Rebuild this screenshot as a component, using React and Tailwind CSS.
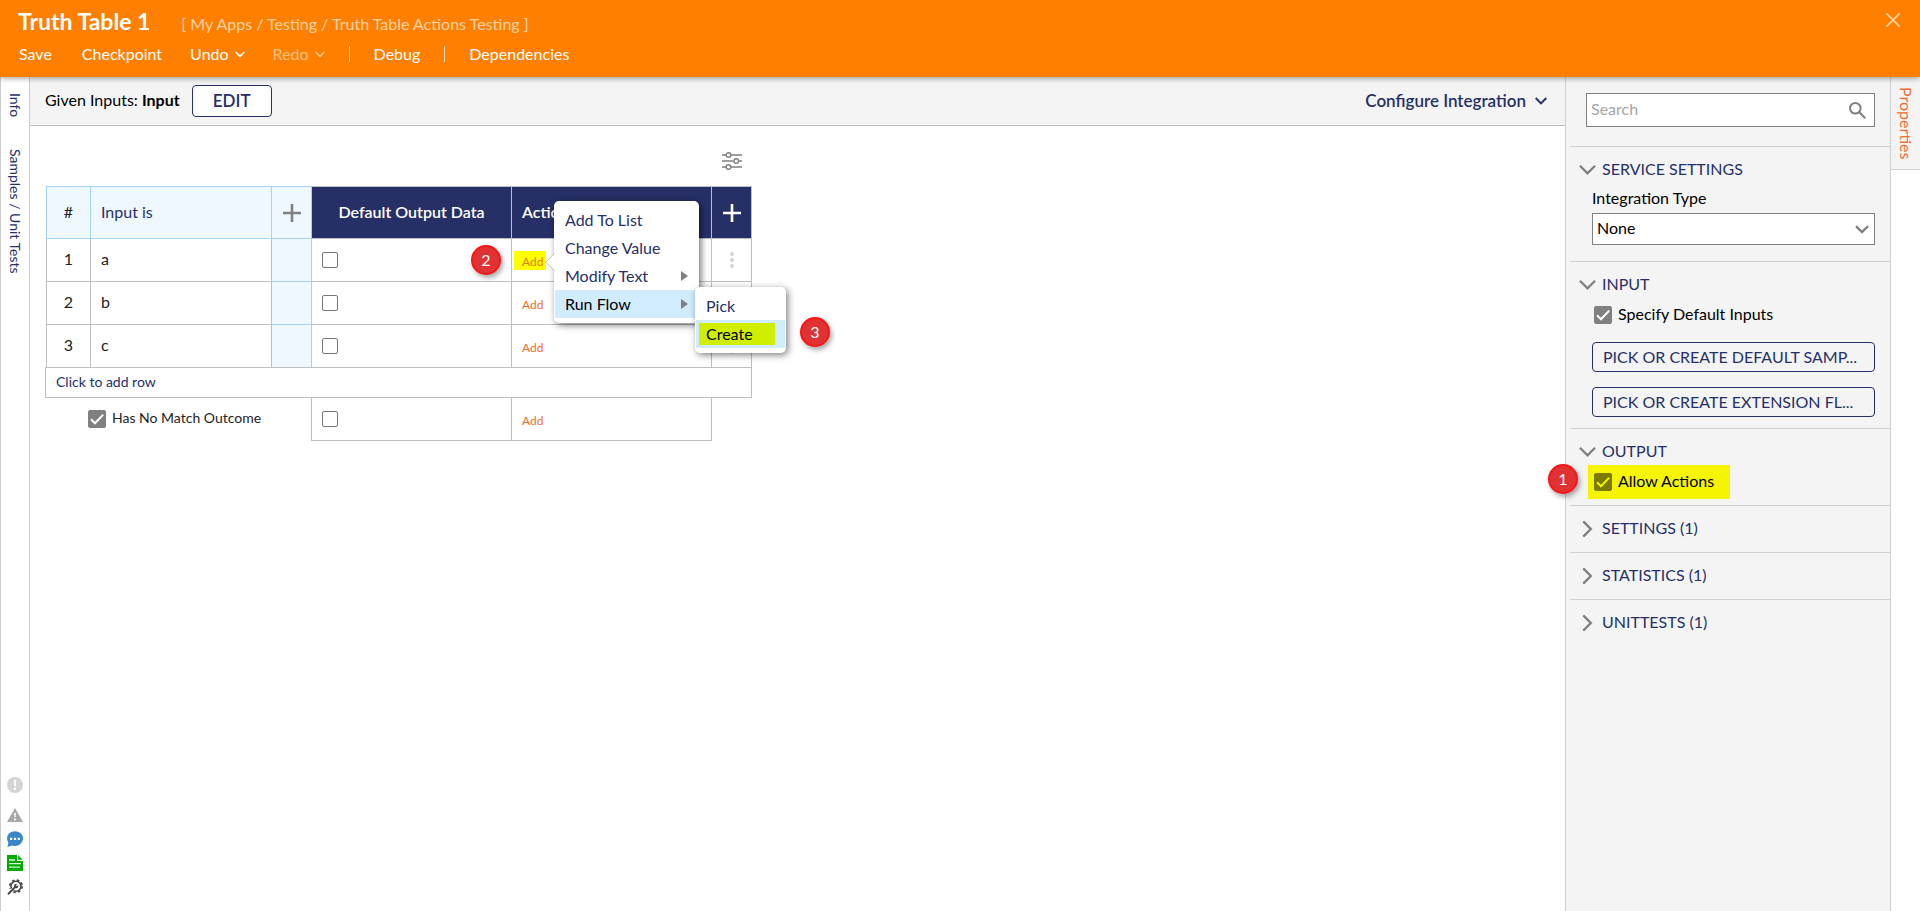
import { useState } from "react"

const rows = [
  { id: 1, value: "a" },
  { id: 2, value: "b" },
  { id: 3, value: "c" },
]

function Chevron({ className, strokeWidth = 2.5 }) {
  return (
    <svg className={className} viewBox="0 0 18 12" fill="none" stroke="currentColor" strokeWidth={strokeWidth}>
      <path d="M1 1.5 9 9.5 17 1.5" />
    </svg>
  )
}

function Plus({ className }) {
  return (
    <svg className={className} width="18" height="18" viewBox="0 0 18 18" stroke="currentColor" strokeWidth="2.6">
      <path d="M9 0v18M0 9h18" />
    </svg>
  )
}

function CheckBox({ id, defaultChecked = true, tone = "gray" }) {
  const yellow = tone === "yellow"
  return (
    <span className="grid size-[18px] shrink-0">
      <input
        id={id}
        type="checkbox"
        defaultChecked={defaultChecked}
        className={`peer col-start-1 row-start-1 size-[18px] appearance-none rounded-xs border border-[#808080] ${
          yellow ? "checked:border-[#7b7b00] checked:bg-[#7b7b00]" : "checked:bg-[#808080]"
        }`}
      />
      <svg
        className={`pointer-events-none invisible col-start-1 row-start-1 size-[18px] peer-checked:visible ${
          yellow ? "text-[#f5f500]" : "text-white"
        }`}
        viewBox="0 0 18 18"
        fill="none"
        stroke="currentColor"
        strokeWidth="2"
      >
        <path d="M3 9.2 7 13.2 15.2 4.6" />
      </svg>
    </span>
  )
}

function EmptyCheck({ label }) {
  return (
    <input
      type="checkbox"
      aria-label={label}
      className="block size-4 appearance-none rounded-[2px] border border-[#767676] bg-white"
    />
  )
}

function Badge({ children, className }) {
  return (
    <span
      className={`absolute z-30 flex size-[30px] items-center justify-center rounded-full border-2 border-[#fb1414] bg-[#e03233] text-base text-white shadow-[2px_3px_5px_rgba(0,0,0,0.35)] ${className}`}
    >
      {children}
    </span>
  )
}

function Header() {
  return (
    <header className="relative z-20 h-[77px] shrink-0 bg-[#ff8000] text-white shadow-[0_1px_6px_rgba(0,0,0,0.4)]">
      <div className="flex items-baseline gap-[31px] pl-[18px] pt-[7px]">
        <h1 className="text-[23px] leading-7 font-bold">Truth Table 1</h1>
        <span className="text-base leading-6 text-[#ffd2a3]">[ My Apps / Testing / Truth Table Actions Testing ]</span>
      </div>
      <nav className="flex items-center pl-[19px] pt-[6px] text-base leading-6">
        <button className="mr-[30px]">Save</button>
        <button className="mr-7">Checkpoint</button>
        <button className="mr-7 flex items-center gap-[6px]">
          Undo <Chevron className="h-[7px] w-[10px]" strokeWidth={3} />
        </button>
        <button className="flex items-center gap-[6px] text-[#ffc080]" disabled>
          Redo <Chevron className="h-[7px] w-[10px]" strokeWidth={3} />
        </button>
        <span className="mx-6 h-4 w-px bg-[#ffd9b3]" />
        <button>Debug</button>
        <span className="mx-6 h-4 w-px bg-[#ffd9b3]" />
        <button>Dependencies</button>
      </nav>
      <button aria-label="Close" className="absolute right-5 top-[13px] text-[#ffd2a3]">
        <svg width="14" height="14" viewBox="0 0 14 14" stroke="currentColor" strokeWidth="1.8">
          <path d="M0 0 14 14M14 0 0 14" />
        </svg>
      </button>
    </header>
  )
}

function LeftRail() {
  return (
    <aside className="flex w-[30px] shrink-0 flex-col items-center border-x border-[#ccc] bg-white text-[#263066]">
      <button className="mt-4 text-sm leading-5 [writing-mode:vertical-rl]">Info</button>
      <button className="mt-8 text-sm leading-5 [writing-mode:vertical-rl]">Samples / Unit Tests</button>
      <div className="mt-auto mb-4 flex flex-col items-center gap-2">
        <svg className="mb-[6px]" width="16" height="16" viewBox="0 0 16 16">
          <circle cx="8" cy="8" r="8" fill="#d4d4d4" />
          <path d="M6.8 3h2.4l-.5 6.2H7.3z" fill="#fff" />
          <circle cx="8" cy="11.8" r="1.3" fill="#fff" />
        </svg>
        <svg width="16" height="16" viewBox="0 0 16 16">
          <path d="M8 1 16 15H0z" fill="#a8a8a8" />
          <path d="M7.1 6h1.8l-.3 4.4H7.4z" fill="#fff" />
          <circle cx="8" cy="12.4" r="1" fill="#fff" />
        </svg>
        <svg width="16" height="16" viewBox="0 0 16 16">
          <ellipse cx="8" cy="7.6" rx="8" ry="7.4" fill="#3a87c8" />
          <path d="M1.5 11 .5 16l6-2z" fill="#3a87c8" />
          <path d="M3 6.8h2.2V9H3zM6.9 6.8h2.2V9H6.9zM10.8 6.8H13V9h-2.2z" fill="#fff" />
        </svg>
        <svg width="16" height="16" viewBox="0 0 16 16">
          <path d="M0 0h11l5 5v11H0z" fill="#00ab00" />
          <path d="M10.6 0v5.4H16" fill="none" stroke="#fff" strokeWidth="1.2" />
          <path d="M2 5h6M2 8.6h12M2 12.2h11" stroke="#d8f5d8" strokeWidth="1.3" />
        </svg>
        <svg width="16" height="16" viewBox="0 0 16 16" fill="none" stroke="#484848">
          <circle cx="9" cy="7.2" r="6.2" strokeWidth="1.6" strokeDasharray="2.6 2.27" />
          <circle cx="9" cy="7.2" r="5" strokeWidth="1.6" />
          <path d="M0 16 5.5 10.5" stroke="#fff" strokeWidth="4" />
          <path d="M1 15.2 8.6 7.6" strokeWidth="2" />
          <circle cx="9.2" cy="7" r="2.2" fill="#484848" stroke="none" />
          <path d="M9.4 6.8 11.6 4.6" stroke="#fff" strokeWidth="1.5" />
        </svg>
      </div>
    </aside>
  )
}

function Toolbar() {
  return (
    <div className="flex h-[49px] shrink-0 items-center border-b border-[#bfbfbf] bg-[#f4f4f4] pl-[15px] pr-[18px]">
      <span className="pb-[2px] text-base text-black">
        Given Inputs: <b className="font-bold">Input</b>
      </span>
      <button className="ml-3 h-8 w-20 rounded border border-[#263066] bg-white text-[17px] font-semibold text-[#263066]">
        EDIT
      </button>
      <button className="ml-auto flex items-center gap-[9px] text-[17px] font-semibold text-[#263066]">
        Configure Integration <Chevron className="h-2 w-3" strokeWidth={3} />
      </button>
    </div>
  )
}

function MenuItem({ children, arrow, active }) {
  return (
    <button
      className={`mx-px flex h-7 w-[calc(100%-2px)] items-center justify-between pr-[10px] pl-[10px] text-left text-base ${
        active ? "bg-[#d1ebff] text-black" : "text-[#263066]"
      }`}
    >
      <span className="pb-px">{children}</span>
      {arrow && (
        <svg width="7" height="10" viewBox="0 0 7 10" fill="#808080">
          <path d="M0 0 7 5 0 10z" />
        </svg>
      )}
    </button>
  )
}

function ActionMenu() {
  return (
    <div className="absolute left-[509px] top-[50px] z-20 w-[145px] rounded-[5px] bg-white py-[5px] shadow-[2px_2px_7px_rgba(0,0,0,0.55)]">
      <svg className="absolute -left-[9px] top-[52px]" width="10" height="18" viewBox="0 0 10 18">
        <path d="M10 0 .5 9 10 18z" fill="#fff" />
        <path d="M9.5 .5 .8 9l8.7 8.5" fill="none" stroke="#c0c0c0" />
      </svg>
      <MenuItem>Add To List</MenuItem>
      <MenuItem>Change Value</MenuItem>
      <MenuItem arrow>Modify Text</MenuItem>
      <MenuItem arrow active>Run Flow</MenuItem>
      <div className="absolute left-[141px] top-[86px] w-[91px] rounded-[5px] bg-white py-[5px] shadow-[2px_2px_7px_rgba(0,0,0,0.5)]">
        <MenuItem>Pick</MenuItem>
        <MenuItem active>
          <span className="-ml-[7px] block w-[76px] bg-[#cfee00] pl-[7px] leading-[22px]">Create</span>
        </MenuItem>
      </div>
    </div>
  )
}

function TruthTable() {
  const cell = "border border-[#bfbfbf]"
  const blue = "border border-[#a3d4f7] bg-[#f0f8ff]"
  return (
    <div className="relative ml-[15px] mt-[25px] w-[707px]">
      <div className="flex h-[35px] justify-end pr-[10px]">
        <button aria-label="Table options" className="size-5">
          <svg width="20" height="18" viewBox="0 0 20 18" fill="none" stroke="#808080" strokeWidth="1.4">
            <path d="M0 3h4M9 3h11M0 9h11.5M17 9h3M0 15h4M9 15h11" />
            <circle cx="6.5" cy="3" r="2.3" />
            <circle cx="14.2" cy="9" r="2.3" />
            <circle cx="6.5" cy="15" r="2.3" />
          </svg>
        </button>
      </div>
      <table className="ml-px w-[705px] table-fixed border-collapse text-base text-[#222]">
        <colgroup>
          <col className="w-[44px]" />
          <col className="w-[181px]" />
          <col className="w-[40px]" />
          <col className="w-[200px]" />
          <col className="w-[200px]" />
          <col className="w-[40px]" />
        </colgroup>
        <thead>
          <tr className="h-[52px]">
            <th className={`${blue} pb-[2px] font-normal`}>#</th>
            <th className={`${blue} px-[10px] pb-[2px] text-left font-normal text-[#263066]`}>Input is</th>
            <th className={blue}>
              <button aria-label="Add input column" className="block w-full text-[#808080]">
                <Plus className="mx-auto" />
              </button>
            </th>
            <th className={`${cell} bg-[#263066] pb-[2px] font-semibold text-white`}>Default Output Data</th>
            <th className={`${cell} bg-[#263066] px-[10px] pb-[2px] text-left font-semibold text-white`}>Actions</th>
            <th className={`${cell} bg-[#263066]`}>
              <button aria-label="Add output column" className="block w-full text-white">
                <Plus className="mx-auto" />
              </button>
            </th>
          </tr>
        </thead>
        <tbody>
          {rows.map((row, i) => (
            <tr key={row.id} className="h-[43px]">
              <td className={`${cell} pb-[2px] text-center`}>{row.id}</td>
              <td className={`${cell} px-[10px] pb-[2px]`}>{row.value}</td>
              <td className={blue}></td>
              <td className={`${cell} px-[10px]`}>
                <EmptyCheck label={`Default output for row ${row.id}`} />
              </td>
              <td className={`${cell} px-[2px]`}>
                <button
                  className={`block h-[19px] w-8 pl-2 text-left text-xs leading-[22px] ${
                    i === 0 ? "bg-[#ffff00] text-[#e87a1c]" : "text-[#f26b2b]"
                  }`}
                >
                  Add
                </button>
              </td>
              <td className={cell}>
                <button aria-label={`Row ${row.id} options`} className="block w-full">
                  <svg className="mx-auto" width="4" height="16" viewBox="0 0 4 16" fill="#d0d0d0">
                    <circle cx="2" cy="2" r="2" />
                    <circle cx="2" cy="8" r="2" />
                    <circle cx="2" cy="14" r="2" />
                  </svg>
                </button>
              </td>
            </tr>
          ))}
        </tbody>
      </table>
      <button className={`${cell} -mt-px block h-[31px] w-full pb-[2px] pl-[10px] text-left text-sm text-[#263066]`}>
        Click to add row
      </button>
      <div className="flex">
        <div className="flex w-[266px] items-center pb-[2px] pl-[43px]">
          <CheckBox id="no-match" />
          <label htmlFor="no-match" className="pb-px pl-[6px] text-sm text-[#222]">
            Has No Match Outcome
          </label>
        </div>
        <div className="flex h-[43px] w-[201px] items-center border-x border-b border-[#bfbfbf] pl-[10px]">
          <EmptyCheck label="Default output for no match" />
        </div>
        <div className="flex h-[43px] w-[200px] items-center border-r border-b border-[#bfbfbf] pl-[10px]">
          <button className="h-[19px] text-xs leading-[22px] text-[#f26b2b]">Add</button>
        </div>
      </div>
      <ActionMenu />
      <Badge className="left-[426px] top-[94px]">2</Badge>
      <Badge className="left-[755px] top-[166px]">3</Badge>
    </div>
  )
}

function Section({ title, open, children }) {
  return (
    <section className="ml-1 border-t border-[#d0d0d0] pb-3">
      <h2 className="flex h-[34px] items-center pt-3">
        <button className="flex items-center text-base leading-5 text-[#263066]">
          <span className="ml-[9px] flex w-[23px] justify-start">
            {open ? (
              <Chevron className="h-3 w-[17px] text-[#808080]" />
            ) : (
              <Chevron className="h-3 w-[17px] -rotate-90 text-[#808080]" />
            )}
          </span>
          <span className="pb-[2px]">{title}</span>
        </button>
      </h2>
      {children}
    </section>
  )
}

function PropertiesPanel() {
  const [integration, setIntegration] = useState("None")
  const pick =
    "block h-[30px] w-full truncate rounded border border-[#263066] pl-[10px] text-left text-base text-[#263066]"
  return (
    <aside className="w-[326px] shrink-0 border-x border-[#d0d0d0] bg-[#f4f4f4] text-base text-black">
      <div className="mt-4 mr-[15px] mb-[19px] ml-5 flex h-[34px] items-center border border-[#808080] bg-white pr-2">
        <input
          type="text"
          aria-label="Search"
          placeholder="Search"
          className="min-w-0 flex-1 pb-[2px] pl-1 outline-none placeholder:text-[#a6a6a6]"
        />
        <svg width="17" height="17" viewBox="0 0 17 17" fill="none" stroke="#808080" strokeWidth="2">
          <circle cx="6.3" cy="6.3" r="5.3" />
          <path d="m10 10 6.3 6.3" />
        </svg>
      </div>
      <Section title="SERVICE SETTINGS" open>
        <div className="mr-[15px] ml-[22px] pb-1">
          <label htmlFor="integration" className="block h-8 leading-[34px]">
            Integration Type
          </label>
          <div className="grid items-center">
            <select
              id="integration"
              value={integration}
              onChange={(e) => setIntegration(e.target.value)}
              className="col-start-1 row-start-1 h-8 appearance-none border border-[#808080] bg-white pb-[2px] pl-1"
            >
              <option>None</option>
            </select>
            <Chevron className="pointer-events-none col-start-1 row-start-1 mr-[6px] h-[9px] w-[14px] justify-self-end text-[#808080]" strokeWidth={3} />
          </div>
        </div>
      </Section>
      <Section title="INPUT" open>
        <div className="-mb-px mr-[15px] ml-[22px]">
          <div className="flex h-[38px] items-center pl-[2px]">
            <CheckBox id="default-inputs" />
            <label htmlFor="default-inputs" className="pb-[2px] pl-[6px]">
              Specify Default Inputs
            </label>
          </div>
          <button className={`${pick} mt-2`}>PICK OR CREATE DEFAULT SAMP...</button>
          <button className={`${pick} mt-[15px]`}>PICK OR CREATE EXTENSION FL...</button>
        </div>
      </Section>
      <Section title="OUTPUT" open>
        <div className="relative -mb-[6px] pt-[2px] pl-[18px]">
          <div className="flex h-[34px] w-[142px] items-center bg-[#f5f500] pl-[6px]">
            <CheckBox id="allow-actions" tone="yellow" />
            <label htmlFor="allow-actions" className="pb-[2px] pl-[6px]">
              Allow Actions
            </label>
          </div>
          <Badge className="-left-[22px] top-px">1</Badge>
        </div>
      </Section>
      <Section title="SETTINGS (1)" />
      <Section title="STATISTICS (1)" />
      <Section title="UNITTESTS (1)" />
    </aside>
  )
}

function App() {
  return (
    <div className="flex h-screen flex-col overflow-hidden bg-white font-[family-name:Lato,sans-serif]">
      <Header />
      <div className="flex min-h-0 flex-1">
        <LeftRail />
        <main className="flex min-w-0 flex-1 flex-col">
          <Toolbar />
          <TruthTable />
        </main>
        <PropertiesPanel />
        <aside className="w-[29px] shrink-0">
          <button className="flex h-[93px] w-full items-center justify-center border-b border-[#d0d0d0] bg-[#f4f4f4] text-base text-[#f26b2b] [writing-mode:vertical-rl]">
            Properties
          </button>
        </aside>
      </div>
    </div>
  )
}

export default App
